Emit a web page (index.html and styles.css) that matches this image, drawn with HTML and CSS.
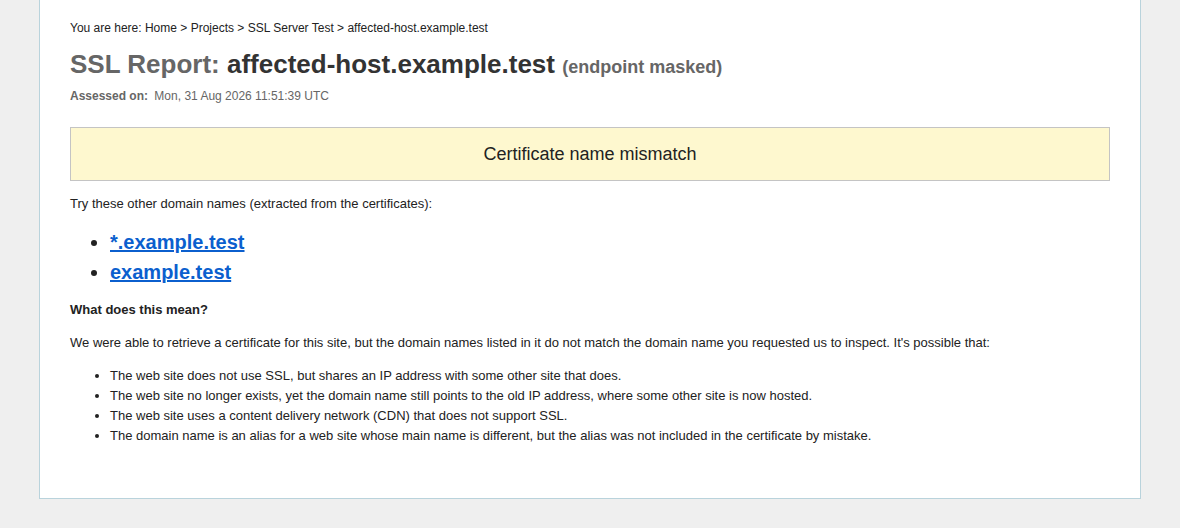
FILE: index.html
```html
<!DOCTYPE html>
<html>
<head>
<meta charset="utf-8">
<link rel="stylesheet" href="styles.css">
</head>
<body>
<div class="page">
  <div class="crumbs">You are here: <a href="#">Home</a> &gt; <a href="#">Projects</a> &gt; <a href="#">SSL Server Test</a> &gt; affected-host.example.test</div>
  <h1 class="title"><span class="title-label">SSL Report:</span> affected-host.example.test <span class="title-note">(endpoint masked)</span></h1>
  <div class="assessed"><span class="assessed-label">Assessed on:</span> Mon, 31 Aug 2026 11:51:39 UTC</div>
  <div class="warning">Certificate name mismatch</div>
  <p class="text">Try these other domain names (extracted from the certificates):</p>
  <ul class="domains">
    <li><a href="#">*.example.test</a></li>
    <li><a href="#">example.test</a></li>
  </ul>
  <p class="text strong">What does this mean?</p>
  <p class="text explain">We were able to retrieve a certificate for this site, but the domain names listed in it do not match the domain name you requested us to inspect. It's possible that:</p>
  <ul class="reasons">
    <li>The web site does not use SSL, but shares an IP address with some other site that does.</li>
    <li>The web site no longer exists, yet the domain name still points to the old IP address, where some other site is now hosted.</li>
    <li>The web site uses a content delivery network (CDN) that does not support SSL.</li>
    <li>The domain name is an alias for a web site whose main name is different, but the alias was not included in the certificate by mistake.</li>
  </ul>
</div>
</body>
</html>
```
FILE: styles.css
```css
html, body {
  margin: 0;
  padding: 0;
  background: #efefef;
}
body {
  font-family: "Liberation Sans", Arial, sans-serif;
  color: #222;
}
.page {
  width: 1040px;
  margin: 0 0 0 39px;
  background: #fff;
  border: 1px solid #b9d3dc;
  border-top: none;
  padding: 20px 30px 52px 30px;
}
.crumbs {
  font-size: 12px;
  line-height: 16px;
  color: #222;
}
.crumbs a {
  color: #222;
  text-decoration: none;
}
.title {
  margin: 13px 0 0 0;
  font-size: 26px;
  line-height: 30px;
  font-weight: bold;
  color: #333;
}
.title-label {
  color: #666;
}
.title-note {
  font-size: 18px;
  color: #666;
}
.assessed {
  margin-top: 6px;
  font-size: 12px;
  line-height: 16px;
  color: #666;
}
.assessed-label {
  font-weight: bold;
  margin-right: 3px;
}
.warning {
  margin-top: 23px;
  height: 52px;
  line-height: 52px;
  background: #fef8cf;
  border: 1px solid #c4c4c4;
  text-align: center;
  font-size: 18px;
  color: #222;
}
.text {
  margin: 14px 0 0 0;
  font-size: 13px;
  line-height: 18px;
  color: #222;
}
.strong {
  font-weight: bold;
  margin-top: 14px;
}
.explain {
  margin-top: 15px;
}
.domains {
  margin: 14px 0 0 0;
  padding-left: 40px;
  font-size: 20px;
  line-height: 30px;
  font-weight: bold;
}
.domains a {
  color: #0b5fce;
}
.reasons {
  margin: 14px 0 0 0;
  padding-left: 40px;
  font-size: 13px;
  line-height: 20px;
  color: #222;
}
```
